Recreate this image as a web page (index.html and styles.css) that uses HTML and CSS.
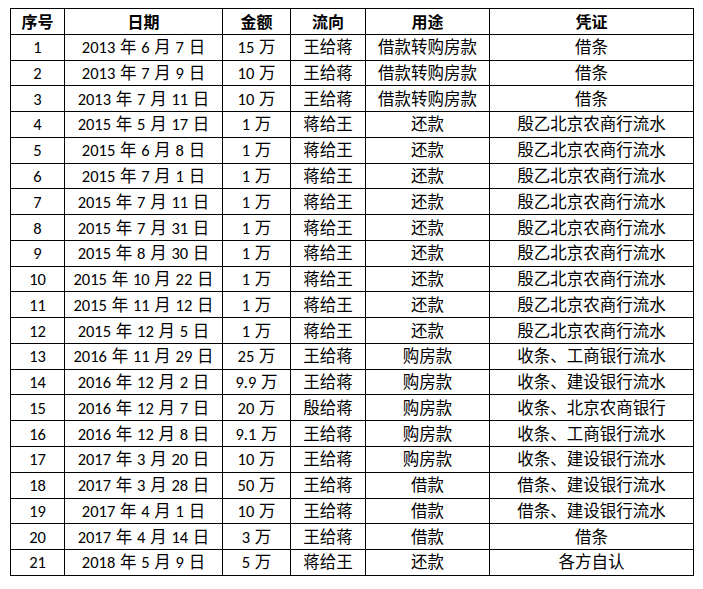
FILE: index.html
```html
<!DOCTYPE html>
<html lang="zh-CN">
<head>
<meta charset="utf-8">
<title>借款记录</title>
<link rel="stylesheet" href="styles.css">
</head>
<body>
<table class="ledger">
  <colgroup>
    <col class="c-no"><col class="c-date"><col class="c-amt"><col class="c-dir"><col class="c-use"><col class="c-proof">
  </colgroup>
  <thead>
    <tr><th>序号</th><th>日期</th><th>金额</th><th>流向</th><th>用途</th><th>凭证</th></tr>
  </thead>
  <tbody>
    <tr><td>1</td><td>2013 年 6 月 7 日</td><td>15 万</td><td>王给蒋</td><td>借款转购房款</td><td>借条</td></tr>
    <tr><td>2</td><td>2013 年 7 月 9 日</td><td>10 万</td><td>王给蒋</td><td>借款转购房款</td><td>借条</td></tr>
    <tr><td>3</td><td>2013 年 7 月 11 日</td><td>10 万</td><td>王给蒋</td><td>借款转购房款</td><td>借条</td></tr>
    <tr><td>4</td><td>2015 年 5 月 17 日</td><td>1 万</td><td>蒋给王</td><td>还款</td><td>殷乙北京农商行流水</td></tr>
    <tr><td>5</td><td>2015 年 6 月 8 日</td><td>1 万</td><td>蒋给王</td><td>还款</td><td>殷乙北京农商行流水</td></tr>
    <tr><td>6</td><td>2015 年 7 月 1 日</td><td>1 万</td><td>蒋给王</td><td>还款</td><td>殷乙北京农商行流水</td></tr>
    <tr><td>7</td><td>2015 年 7 月 11 日</td><td>1 万</td><td>蒋给王</td><td>还款</td><td>殷乙北京农商行流水</td></tr>
    <tr><td>8</td><td>2015 年 7 月 31 日</td><td>1 万</td><td>蒋给王</td><td>还款</td><td>殷乙北京农商行流水</td></tr>
    <tr><td>9</td><td>2015 年 8 月 30 日</td><td>1 万</td><td>蒋给王</td><td>还款</td><td>殷乙北京农商行流水</td></tr>
    <tr><td>10</td><td>2015 年 10 月 22 日</td><td>1 万</td><td>蒋给王</td><td>还款</td><td>殷乙北京农商行流水</td></tr>
    <tr><td>11</td><td>2015 年 11 月 12 日</td><td>1 万</td><td>蒋给王</td><td>还款</td><td>殷乙北京农商行流水</td></tr>
    <tr><td>12</td><td>2015 年 12 月 5 日</td><td>1 万</td><td>蒋给王</td><td>还款</td><td>殷乙北京农商行流水</td></tr>
    <tr><td>13</td><td>2016 年 11 月 29 日</td><td>25 万</td><td>王给蒋</td><td>购房款</td><td>收条、工商银行流水</td></tr>
    <tr><td>14</td><td>2016 年 12 月 2 日</td><td>9.9 万</td><td>王给蒋</td><td>购房款</td><td>收条、建设银行流水</td></tr>
    <tr><td>15</td><td>2016 年 12 月 7 日</td><td>20 万</td><td>殷给蒋</td><td>购房款</td><td>收条、北京农商银行</td></tr>
    <tr><td>16</td><td>2016 年 12 月 8 日</td><td>9.1 万</td><td>王给蒋</td><td>购房款</td><td>收条、工商银行流水</td></tr>
    <tr><td>17</td><td>2017 年 3 月 20 日</td><td>10 万</td><td>王给蒋</td><td>购房款</td><td>收条、建设银行流水</td></tr>
    <tr><td>18</td><td>2017 年 3 月 28 日</td><td>50 万</td><td>王给蒋</td><td>借款</td><td>借条、建设银行流水</td></tr>
    <tr><td>19</td><td>2017 年 4 月 1 日</td><td>10 万</td><td>王给蒋</td><td>借款</td><td>借条、建设银行流水</td></tr>
    <tr><td>20</td><td>2017 年 4 月 14 日</td><td>3 万</td><td>王给蒋</td><td>借款</td><td>借条</td></tr>
    <tr><td>21</td><td>2018 年 5 月 9 日</td><td>5 万</td><td>蒋给王</td><td>还款</td><td>各方自认</td></tr>
  </tbody>
</table>
</body>
</html>
```

FILE: styles.css
```css
html, body {
  margin: 0;
  padding: 0;
  background: #ffffff;
}

body {
  padding: 8px 0 0 10px;
}

.ledger {
  border-collapse: collapse;
  table-layout: fixed;
  width: 683px;
  font-family: "Carlito", "Lato", "Noto Sans CJK SC", sans-serif;
  font-size: 16.5px;
  word-spacing: 1px;
  color: #000;
}

.c-no { width: 54px; }
.c-date { width: 158px; }
.c-amt { width: 68px; }
.c-dir { width: 75px; }
.c-use { width: 124px; }
.c-proof { width: 204px; }

.ledger th,
.ledger td {
  border: 1px solid #000;
  height: 24.77px;
  padding: 0;
  text-align: center;
  vertical-align: middle;
  line-height: 18px;
  white-space: nowrap;
  overflow: hidden;
}

.ledger th {
  font-family: "Noto Sans CJK SC", sans-serif;
  font-weight: 700;
  font-size: 16px;
  word-spacing: 0;
}
```
